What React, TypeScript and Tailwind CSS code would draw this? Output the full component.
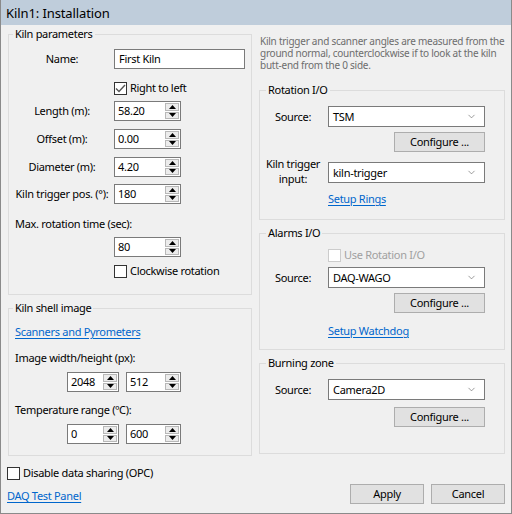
import React from "react";
import { ChevronDown } from "lucide-react";

const font = { fontFamily: '"Noto Sans", "Liberation Sans", sans-serif' };

function Spin({ value, w }: { value: string; w: string }) {
  return (
    <div className={`flex h-[20px] ${w} border border-[#7a7a7a] bg-white`}>
      <div className="flex-1 pl-[3px] leading-[18px]">{value}</div>
      <div className="flex w-[16px] flex-col gap-px p-px">
        <div className="flex flex-1 items-center justify-center border border-[#b8b8b8] bg-[#ececec]">
          <svg width="7" height="4" viewBox="0 0 7 4">
            <path d="M3.5 0 L7 4 L0 4 Z" fill="#000" />
          </svg>
        </div>
        <div className="flex flex-1 items-center justify-center border border-[#b8b8b8] bg-[#ececec]">
          <svg width="7" height="4" viewBox="0 0 7 4">
            <path d="M0 0 L7 0 L3.5 4 Z" fill="#000" />
          </svg>
        </div>
      </div>
    </div>
  );
}

function Select({ value }: { value: string }) {
  return (
    <div className="flex h-[21px] w-[157px] items-center border border-[#7a7a7a] bg-white pl-[4px] pr-[7px]">
      <span className="flex-1">{value}</span>
      <ChevronDown size={11} strokeWidth={1.3} color="#5a5a5a" />
    </div>
  );
}

function Button({ label, w }: { label: string; w: string }) {
  return (
    <button className={`h-[20px] ${w} border border-[#adadad] bg-[#e1e1e1] leading-[18px]`}>
      {label}
    </button>
  );
}

function Check({ checked, disabled }: { checked?: boolean; disabled?: boolean }) {
  return (
    <span
      className={`flex h-[13px] w-[13px] items-center justify-center border bg-white ${
        disabled ? "border-[#cccccc]" : "border-[#333333]"
      }`}
    >
      {checked && (
        <svg width="11" height="9" viewBox="0 0 11 9">
          <path d="M1 4.5 L4 7.5 L10 1" fill="none" stroke="#555" strokeWidth="1.4" />
        </svg>
      )}
    </span>
  );
}

function Link({ text }: { text: string }) {
  return <span className="text-[#0066cc] underline underline-offset-2">{text}</span>;
}

function Label({ text }: { text: string }) {
  return <div className="w-[96px] whitespace-nowrap text-center">{text}</div>;
}

export default function App() {
  return (
    <div
      style={font}
      className="h-[514px] w-[512px] border-x border-b border-[#8a8a8a] bg-[#f0f0f0] text-[11px] leading-[16px] tracking-[-0.3px] text-black"
    >
      <div className="flex h-[25px] items-center bg-[#bfcddb] pl-[5px] text-[13px] tracking-[-0.1px]">
        Kiln1: Installation
      </div>

      <div className="flex pl-[7px]">
        {/* left column */}
        <div className="w-[244px]">
          <fieldset className="mt-px border border-[#dcdcdc] pb-[13px]">
            <legend className="ml-[4px] px-[2px]">Kiln parameters</legend>
            <div className="mt-[7px] flex items-center">
              <div className="ml-[5px]">
                <Label text="Name:" />
              </div>
              <div className="ml-[4px] h-[20px] w-[131px] border border-[#7a7a7a] bg-white pl-[4px] leading-[18px]">
                First Kiln
              </div>
            </div>
            <div className="mt-[9px] flex h-[20px] items-center pl-[105px]">
              <Check checked />
              <span className="ml-[3px]">Right to left</span>
            </div>
            <div className="mt-[3px] flex items-center pl-[5px]">
              <Label text="Length (m):" />
              <div className="ml-[4px]">
                <Spin value="58.20" w="w-[67px]" />
              </div>
            </div>
            <div className="mt-[8px] flex items-center pl-[5px]">
              <Label text="Offset (m):" />
              <div className="ml-[4px]">
                <Spin value="0.00" w="w-[67px]" />
              </div>
            </div>
            <div className="mt-[8px] flex items-center pl-[5px]">
              <Label text="Diameter (m):" />
              <div className="ml-[4px]">
                <Spin value="4.20" w="w-[67px]" />
              </div>
            </div>
            <div className="mt-[7px] flex items-center pl-[5px]">
              <Label text="Kiln trigger pos. (°):" />
              <div className="ml-[4px]">
                <Spin value="180" w="w-[67px]" />
              </div>
            </div>
            <div className="mt-[12px] pl-[6px]">Max. rotation time (sec):</div>
            <div className="mt-[5px] pl-[105px]">
              <Spin value="80" w="w-[67px]" />
            </div>
            <div className="mt-[4px] flex h-[20px] items-center pl-[105px]">
              <Check />
              <span className="ml-[3px]">Clockwise rotation</span>
            </div>
          </fieldset>

          <fieldset className="mt-[5px] border border-[#dcdcdc] pb-[11px]">
            <legend className="ml-[4px] px-[2px]">Kiln shell image</legend>
            <div className="mt-[8px] pl-[6px]">
              <Link text="Scanners and Pyrometers" />
            </div>
            <div className="mt-[10px] pl-[6px]">Image width/height (px):</div>
            <div className="mt-[6px] flex gap-[7px] pl-[58px]">
              <Spin value="2048" w="w-[52px]" />
              <Spin value="512" w="w-[55px]" />
            </div>
            <div className="mt-[10px] pl-[6px]">Temperature range (ºC):</div>
            <div className="mt-[6px] flex gap-[7px] pl-[58px]">
              <Spin value="0" w="w-[52px]" />
              <Spin value="600" w="w-[55px]" />
            </div>
          </fieldset>

          <div className="-ml-px mt-[7px] flex h-[20px] items-center">
            <Check />
            <span className="ml-[3px]">Disable data sharing (OPC)</span>
          </div>
          <div className="-ml-px mt-[5px]">
            <Link text="DAQ Test Panel" />
          </div>
        </div>

        {/* right column */}
        <div className="ml-[7px] w-[246px]">
          <p className="mt-[10px] whitespace-nowrap pl-px text-[10px] leading-[12px] tracking-[-0.25px] text-[#6d6d6d]">
            Kiln trigger and scanner angles are measured from the
            <br />
            ground normal, counterclockwise if to look at the kiln
            <br />
            butt-end from the 0 side.
          </p>

          <fieldset className="mt-[11px] border border-[#dcdcdc] pb-[12px]">
            <legend className="ml-[6px] px-[2px]">Rotation I/O</legend>
            <div className="mt-[8px] flex items-center">
              <div className="w-[66px] text-center">Source:</div>
              <div className="ml-[2px]">
                <Select value="TSM" />
              </div>
            </div>
            <div className="mt-[5px] pl-[134px]">
              <Button label="Configure ..." w="w-[91px]" />
            </div>
            <div className="mt-[4px] flex items-start">
              <div className="w-[66px] text-center leading-[15px]">
                Kiln trigger
                <br />
                input:
              </div>
              <div className="ml-[2px] mt-[6px]">
                <Select value="kiln-trigger" />
              </div>
            </div>
            <div className="mt-[5px] pl-[68px]">
              <Link text="Setup Rings" />
            </div>
          </fieldset>

          <fieldset className="mt-[5px] border border-[#dcdcdc] pb-[10px]">
            <legend className="ml-[6px] px-[2px]">Alarms I/O</legend>
            <div className="mt-[4px] flex h-[20px] items-center pl-[68px]">
              <Check disabled />
              <span className="ml-[3px] text-[#a0a0a0]">Use Rotation I/O</span>
            </div>
            <div className="mt-[2px] flex items-center">
              <div className="w-[66px] text-center">Source:</div>
              <div className="ml-[2px]">
                <Select value="DAQ-WAGO" />
              </div>
            </div>
            <div className="mt-[5px] pl-[134px]">
              <Button label="Configure ..." w="w-[91px]" />
            </div>
            <div className="mt-[10px] pl-[68px]">
              <Link text="Setup Watchdog" />
            </div>
          </fieldset>

          <fieldset className="mt-[5px] border border-[#dcdcdc] pb-[26px]">
            <legend className="ml-[6px] px-[2px]">Burning zone</legend>
            <div className="mt-[8px] flex items-center">
              <div className="w-[66px] text-center">Source:</div>
              <div className="ml-[2px]">
                <Select value="Camera2D" />
              </div>
            </div>
            <div className="mt-[7px] pl-[134px]">
              <Button label="Configure ..." w="w-[91px]" />
            </div>
          </fieldset>

          <div className="mt-[30px] flex gap-[7px] pl-[91px]">
            <Button label="Apply" w="w-[74px]" />
            <Button label="Cancel" w="w-[74px]" />
          </div>
        </div>
      </div>
    </div>
  );
}
